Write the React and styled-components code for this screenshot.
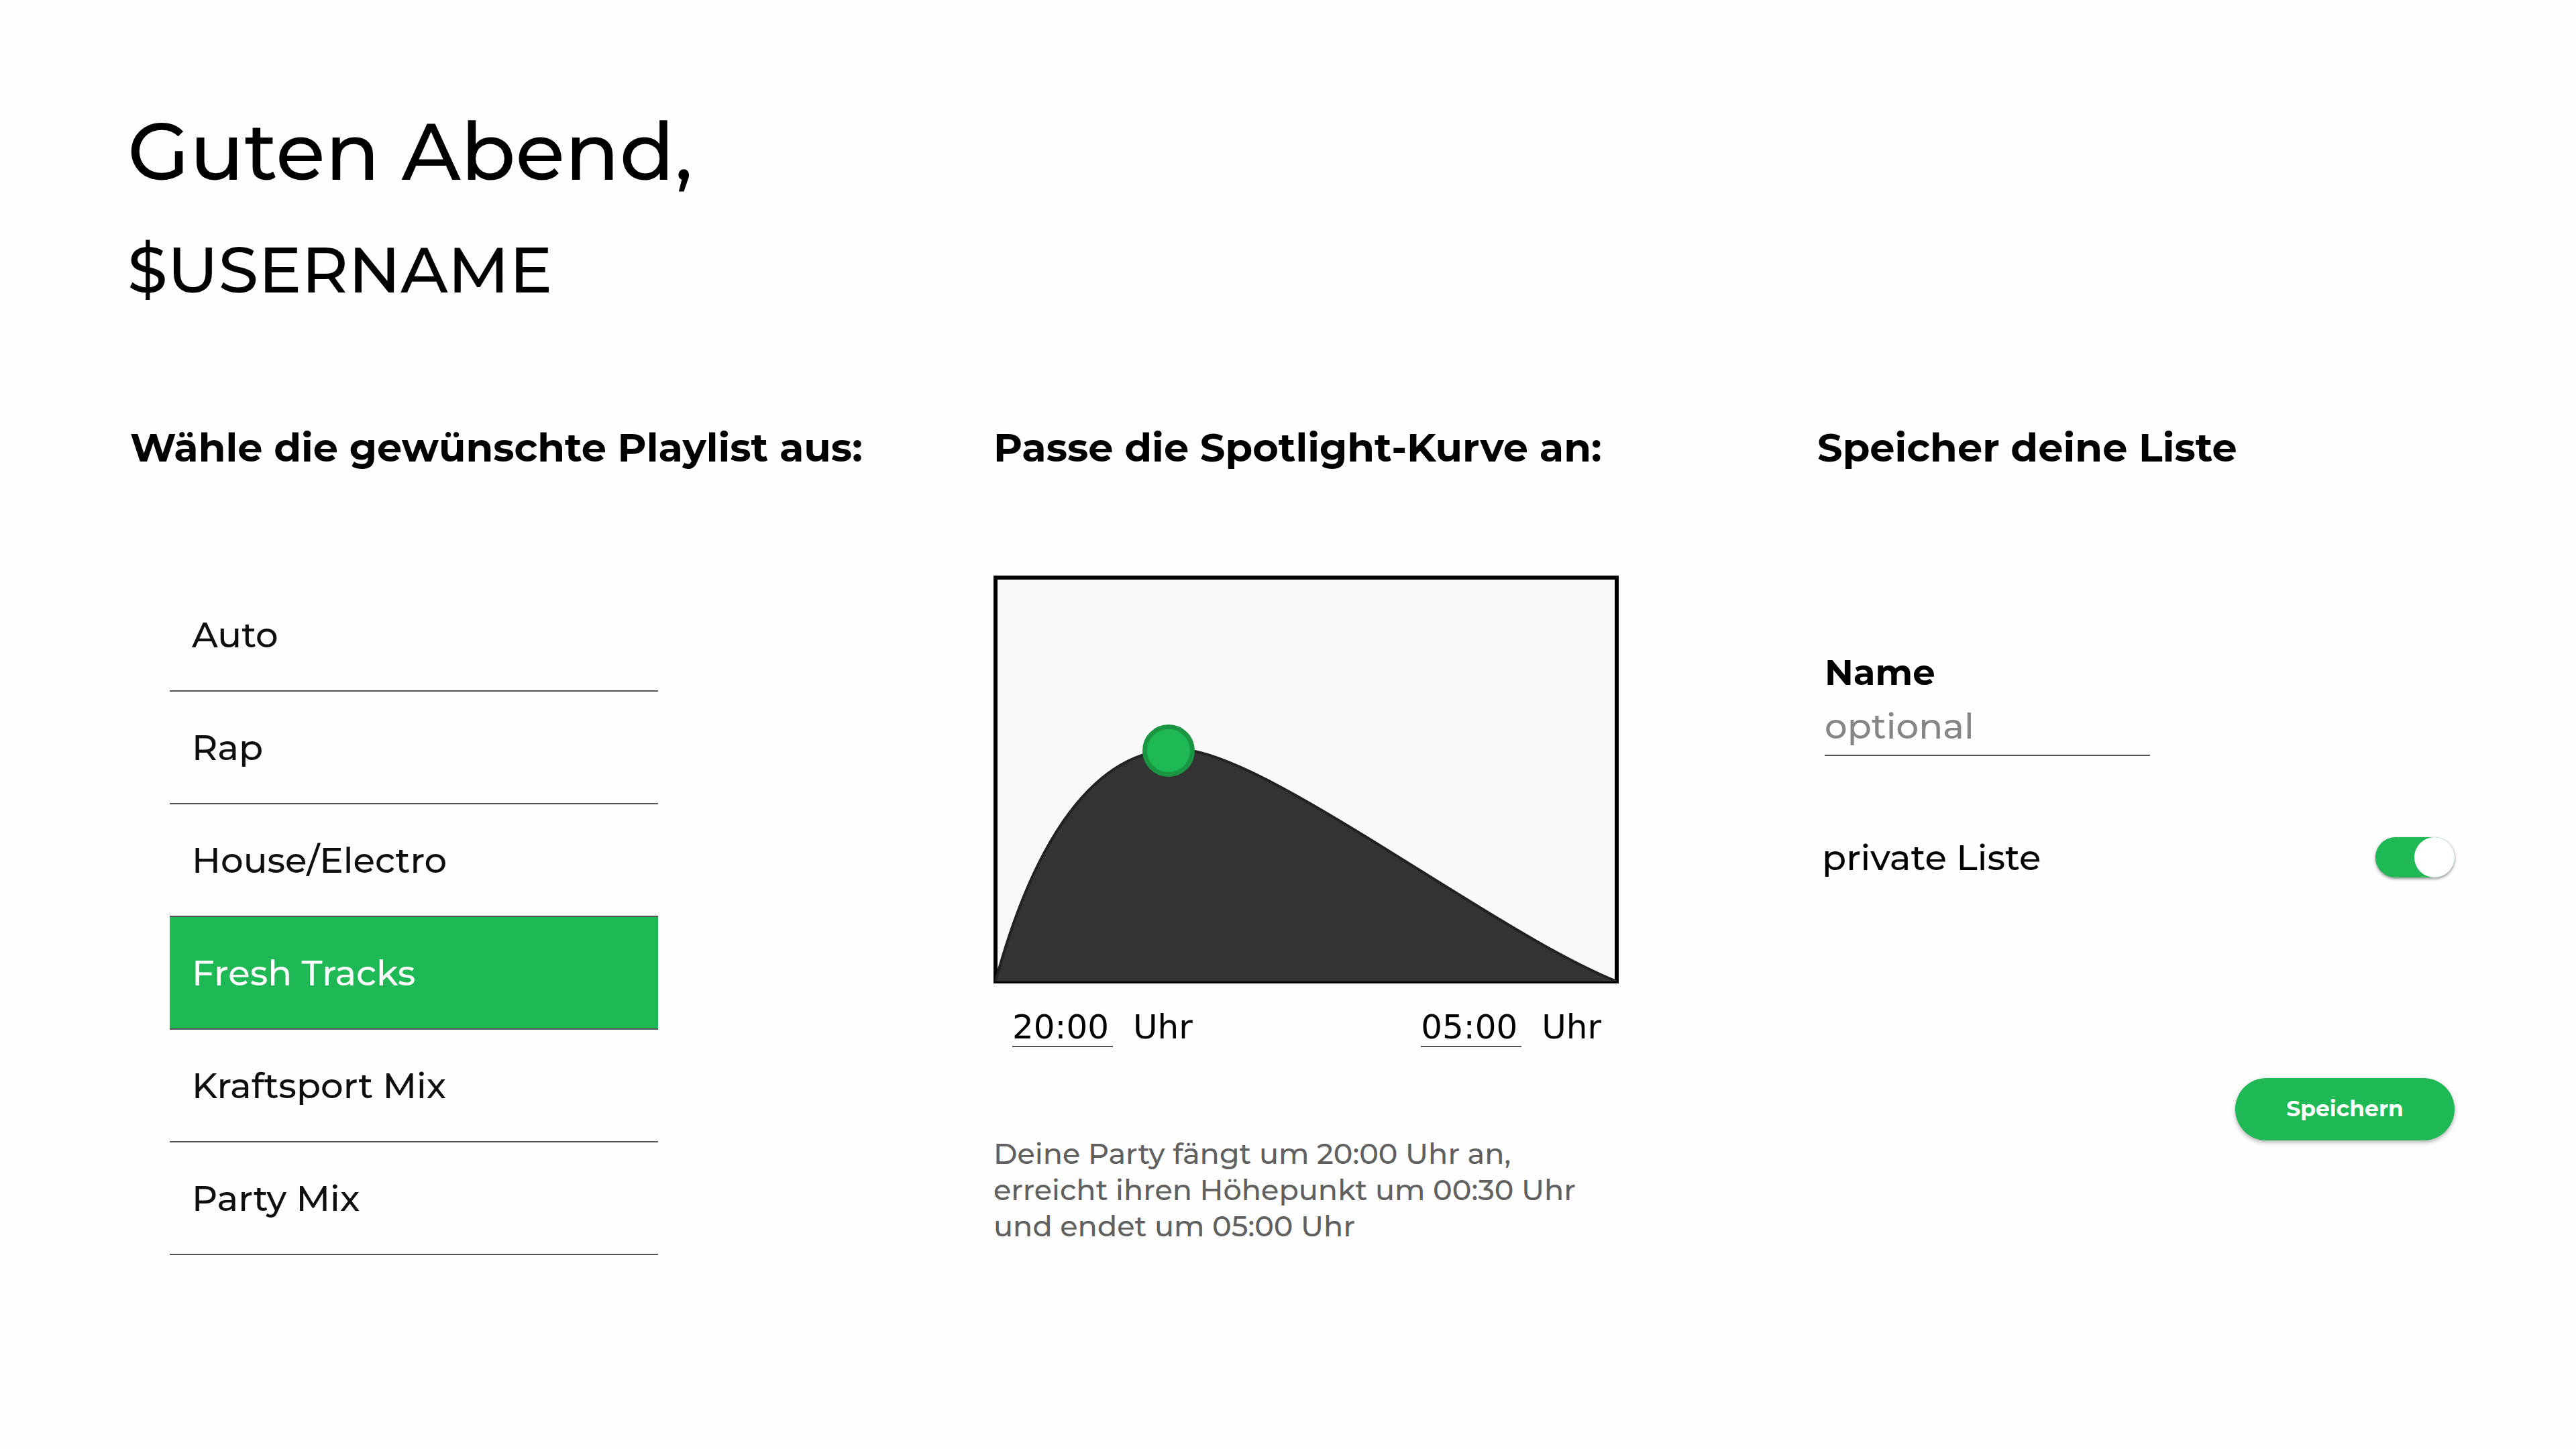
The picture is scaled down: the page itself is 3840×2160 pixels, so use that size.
import React, { useState } from "react";
import styled, { createGlobalStyle } from "styled-components";

const green = "#1eb955";
const line = "#555";
const sans = `Montserrat, Inter, "DejaVu Sans", sans-serif`;
const clock = `"DejaVu Sans", Verdana, sans-serif`;

const GlobalStyle = createGlobalStyle`
  *, *::before { box-sizing: border-box; }
  body { margin: 0; background: #fefefe; color: #000; font-family: ${sans}; font-weight: 500; }
  h1, h2, p, ul { margin: 0; padding: 0; }
  input, button { font: inherit; color: inherit; margin: 0; padding: 0; border: 0; background: none; }
`;

const Page = styled.main`
  min-height: 100vh;
  padding: 153px 181px 153px 190px;
`;

const Greeting = styled.h1`
  font-size: 120px;
  line-height: 144px;
  font-weight: 500;
`;

const UserName = styled.p`
  margin-top: 45px;
  font-size: 96px;
  line-height: 120px;
`;

const Columns = styled.div`
  display: grid;
  grid-template-columns: 1291fr 1228fr 950fr;
  align-items: start;
  margin-top: 169px;
`;

const Column = styled.section`
  display: flex;
  flex-direction: column;
`;

const ColumnTitle = styled.h2`
  font-size: 59px;
  line-height: 72px;
  font-weight: 700;
  padding-left: ${(p) => p.$inset || 0}px;
`;

const Playlists = styled.ul`
  list-style: none;
  width: 728px;
  margin: 160px 0 0 63px;
`;

const PlaylistButton = styled.button`
  display: block;
  width: 100%;
  height: 168px;
  padding: 0 33px;
  border-bottom: 2px solid ${line};
  background: ${(p) => (p.$selected ? green : "transparent")};
  color: ${(p) => (p.$selected ? "#fff" : "#0e0e0e")};
  font-size: 53px;
  line-height: 66px;
  text-align: left;
  cursor: pointer;
`;

const CurvePanel = styled.div`
  width: 932px;
  margin-top: 155px;
`;

const CurveChart = styled.svg`
  display: block;
  width: 100%;
  height: auto;
`;

const TimeRow = styled.div`
  display: flex;
  justify-content: space-between;
  margin-top: 37px;
  padding: 0 26px 0 28px;
  font-family: ${clock};
  font-weight: 400;
  font-size: 50px;
  line-height: 56px;
`;

const TimeField = styled.label`
  display: flex;
  gap: 30px;
`;

const TimeInput = styled.input`
  width: 150px;
  height: 58px;
  border-bottom: 2px solid ${line};
`;

const Summary = styled.p`
  margin-top: 132px;
  color: #606060;
  font-size: 43px;
  line-height: 54px;
`;

const SaveForm = styled.form`
  display: flex;
  flex-direction: column;
  margin-top: 266px;
  padding-left: 7px;
  font-size: 53px;
  line-height: 66px;
`;

const NameField = styled.div`
  display: flex;
  flex-direction: column;
  align-items: flex-start;
  gap: 14px;
  padding-left: 4px;
`;

const NameLabel = styled.label`
  font-weight: 700;
`;

const NameInput = styled.input`
  width: 485px;
  height: 78px;
  padding-bottom: 10px;
  border-bottom: 2px solid ${line};
  &::placeholder { color: #868686; opacity: 1; }
`;

const ToggleRow = styled.div`
  display: flex;
  align-items: center;
  justify-content: space-between;
  margin-top: 118px;
`;

const Toggle = styled.input`
  appearance: none;
  width: 118px;
  height: 60px;
  border-radius: 30px;
  background: ${(p) => (p.checked ? green : "#bbb")};
  box-shadow: 0 2px 4px rgba(0, 0, 0, 0.45);
  display: flex;
  justify-content: ${(p) => (p.checked ? "flex-end" : "flex-start")};
  cursor: pointer;
  &::before {
    content: "";
    width: 60px;
    height: 60px;
    border-radius: 50%;
    background: #fff;
  }
`;

const SaveButton = styled.button`
  align-self: flex-end;
  width: 327px;
  height: 93px;
  margin-top: 296px;
  padding-bottom: 4px;
  border-radius: 47px;
  background: ${green};
  box-shadow: 0 3px 6px rgba(0, 0, 0, 0.3);
  color: #fff;
  font-size: 33px;
  line-height: 40px;
  font-weight: 700;
  cursor: pointer;
`;

const playlists = ["Auto", "Rap", "House/Electro", "Fresh Tracks", "Kraftsport Mix", "Party Mix"];

const curve = "M3 605C60 395 150 259 275 259C400 259 740 529 929 605";

export default function App() {
  const [selected, setSelected] = useState("Fresh Tracks");
  const [isPrivate, setPrivate] = useState(true);
  const [start, setStart] = useState("20:00");
  const [end, setEnd] = useState("05:00");

  return (
    <Page>
      <GlobalStyle />
      <header>
        <Greeting>Guten Abend,</Greeting>
        <UserName>$USERNAME</UserName>
      </header>
      <Columns>
        <Column>
          <ColumnTitle $inset={4}>Wähle die gewünschte Playlist aus:</ColumnTitle>
          <Playlists>
            {playlists.map((name) => (
              <li key={name}>
                <PlaylistButton
                  type="button"
                  $selected={name === selected}
                  aria-pressed={name === selected}
                  onClick={() => setSelected(name)}
                >
                  {name}
                </PlaylistButton>
              </li>
            ))}
          </Playlists>
        </Column>

        <Column>
          <ColumnTitle>Passe die Spotlight-Kurve an:</ColumnTitle>
          <CurvePanel>
            <CurveChart viewBox="0 0 932 608" role="img" aria-label="Spotlight-Kurve">
              <rect x="3" y="3" width="926" height="602" fill="#f9f9f9" stroke="#000" strokeWidth="6" />
              <path d={`${curve}Z`} fill="#333" />
              <path d={curve} fill="none" stroke="#222" strokeWidth="4" />
              <path d="M0 606.5H932" stroke="#000" strokeWidth="3" />
              <circle cx="261" cy="261" r="35.5" fill={green} stroke="#1a9643" strokeWidth="7" />
            </CurveChart>
            <TimeRow>
              <TimeField>
                <TimeInput value={start} onChange={(e) => setStart(e.target.value)} />
                Uhr
              </TimeField>
              <TimeField>
                <TimeInput value={end} onChange={(e) => setEnd(e.target.value)} />
                Uhr
              </TimeField>
            </TimeRow>
            <Summary>
              Deine Party fängt um {start} Uhr an,
              <br />
              erreicht ihren Höhepunkt um 00:30 Uhr
              <br />
              und endet um {end} Uhr
            </Summary>
          </CurvePanel>
        </Column>

        <Column>
          <ColumnTitle>Speicher deine Liste</ColumnTitle>
          <SaveForm onSubmit={(e) => e.preventDefault()}>
            <NameField>
              <NameLabel htmlFor="list-name">Name</NameLabel>
              <NameInput id="list-name" placeholder="optional" />
            </NameField>
            <ToggleRow>
              <label htmlFor="list-private">private Liste</label>
              <Toggle
                id="list-private"
                type="checkbox"
                role="switch"
                checked={isPrivate}
                onChange={(e) => setPrivate(e.target.checked)}
              />
            </ToggleRow>
            <SaveButton type="submit">Speichern</SaveButton>
          </SaveForm>
        </Column>
      </Columns>
    </Page>
  );
}
